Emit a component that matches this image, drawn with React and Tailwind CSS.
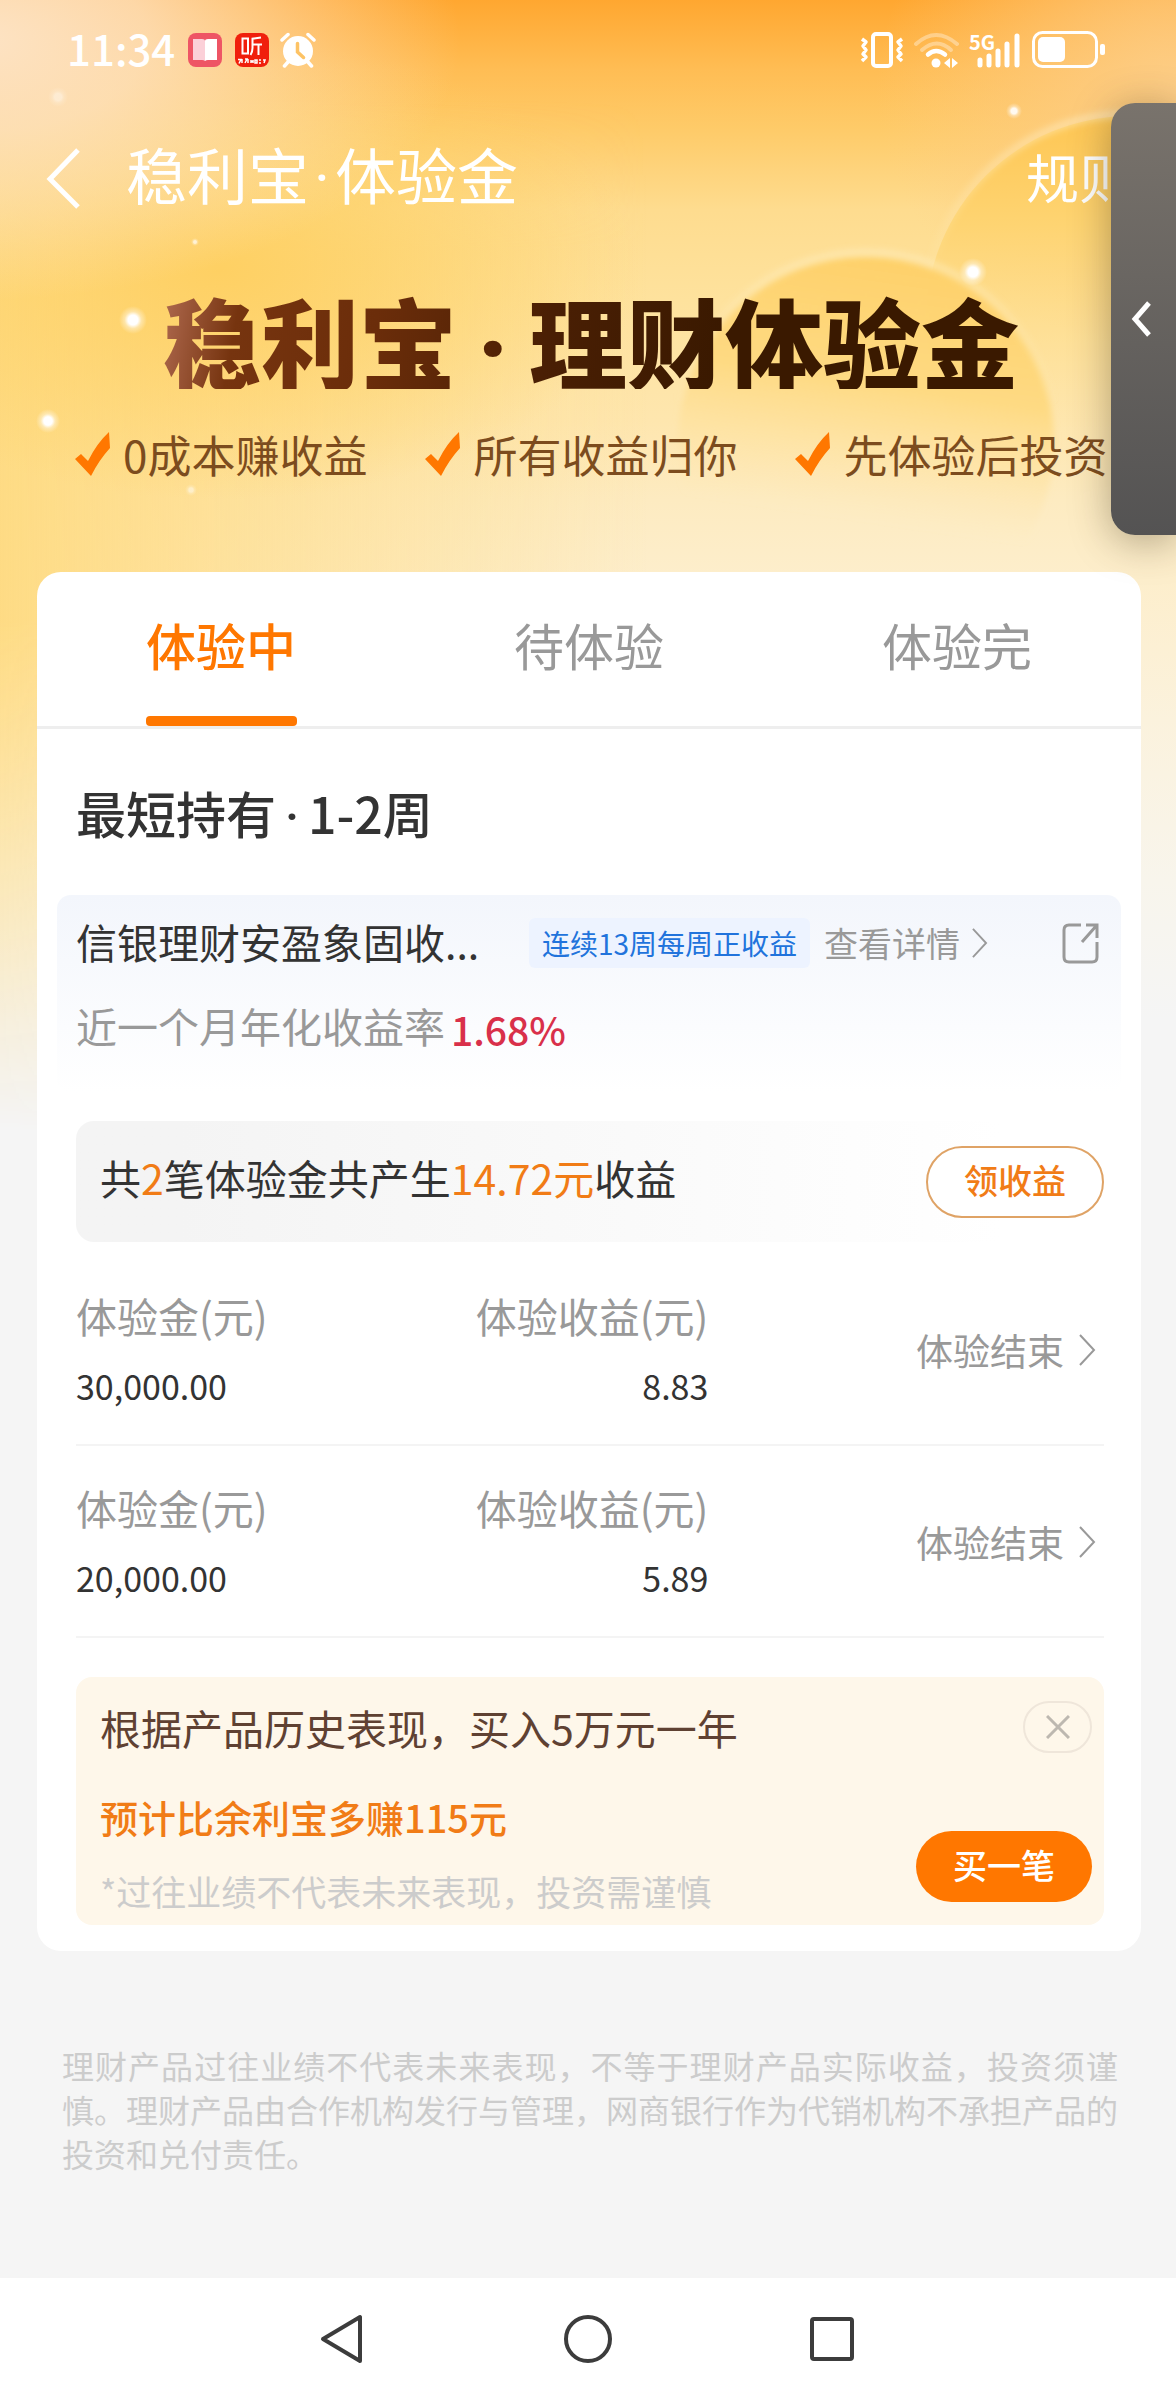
import React, { useState } from 'react';

const TABS = ['体验中', '待体验', '体验完'];
const PERKS = ['0成本赚收益', '所有收益归你', '先体验后投资'];
const RECORDS = [
  { amount: '30,000.00', income: '8.83' },
  { amount: '20,000.00', income: '5.89' },
];

const SPARKS = [
  { x: 133, y: 320, r: 7, o: 1 },
  { x: 48, y: 421, r: 6, o: 1 },
  { x: 973, y: 272, r: 7, o: 1 },
  { x: 1014, y: 111, r: 4, o: 0.9 },
  { x: 58, y: 97, r: 5, o: 0.4 },
  { x: 195, y: 242, r: 2, o: 0.7 },
  { x: 191, y: 490, r: 3, o: 0.5 },
];

function Backdrop() {
  return (
    <div className="absolute inset-x-0 top-0 -z-10 h-[1200px] overflow-hidden bg-[linear-gradient(to_bottom,#ffa730_0px,#ffbd54_70px,#fecb69_130px,#fedc8f_210px,#fee29d_300px,#fee6ae_420px,#fdebc1_500px,#fdeecc_580px,#fbf2dd_720px,#f8f5ec_880px,#f5f5f5_1020px)]">
      <div className="absolute inset-0 bg-[linear-gradient(to_right,#fedb84_0%,#fedb8400_55%)] [mask-image:linear-gradient(to_bottom,transparent_100px,black_250px,black_620px,transparent_1130px)]" />
      <div className="absolute inset-0 bg-[radial-gradient(ellipse_420px_230px_at_220px_270px,#fed063,#fed06300)]" />
      <div className="absolute inset-0 bg-[radial-gradient(ellipse_480px_260px_at_-20px_40px,#fde3c4,#fde3c4cc_35%,#fde3c400)]" />
      <div className="absolute inset-0 bg-[radial-gradient(ellipse_300px_260px_at_100%_90px,#fdcd86,#fdcd8600)]" />
      <svg className="absolute right-0 top-0" width="1176" height="640" viewBox="0 0 1176 640" fill="none" aria-hidden="true">
        <defs>
          <linearGradient id="sunA" x1="0" y1="115" x2="0" y2="430" gradientUnits="userSpaceOnUse">
            <stop offset="0" stopColor="#fec653" />
            <stop offset="0.35" stopColor="#fed472" />
            <stop offset="1" stopColor="#fee29d" stopOpacity="0" />
          </linearGradient>
          <linearGradient id="sunB" x1="900" y1="250" x2="860" y2="520" gradientUnits="userSpaceOnUse">
            <stop offset="0" stopColor="#fed068" />
            <stop offset="0.5" stopColor="#fed97f" stopOpacity="0.9" />
            <stop offset="1" stopColor="#fee6ae" stopOpacity="0" />
          </linearGradient>
          <linearGradient id="rim" x1="0" y1="0" x2="0" y2="1">
            <stop offset="0" stopColor="#fff0c8" stopOpacity="0.5" />
            <stop offset="0.4" stopColor="#fff0c8" stopOpacity="0" />
          </linearGradient>
          <filter id="soft" x="-20%" y="-20%" width="140%" height="140%">
            <feGaussianBlur stdDeviation="3" />
          </filter>
          <radialGradient id="spark">
            <stop offset="0.35" stopColor="#fff" />
            <stop offset="0.6" stopColor="#fff" stopOpacity="0.4" />
            <stop offset="1" stopColor="#fff" stopOpacity="0" />
          </radialGradient>
        </defs>
        <circle cx="1130" cy="320" r="204" fill="url(#sunA)" />
        <circle cx="1130" cy="320" r="206" stroke="url(#rim)" strokeWidth="8" filter="url(#soft)" />
        <circle cx="866" cy="443" r="188" fill="url(#sunB)" filter="url(#soft)" />
        <circle cx="866" cy="443" r="190" stroke="url(#rim)" strokeWidth="8" filter="url(#soft)" />
        {SPARKS.map((s) => (
          <circle key={`${s.x}-${s.y}`} cx={s.x} cy={s.y} r={s.r * 2} fill="url(#spark)" opacity={s.o} />
        ))}
      </svg>
    </div>
  );
}

// half-width middle dot, the CJK face draws it a full em wide
function Dot({ className }) {
  return <span className={`inline-block text-center font-['Roboto',sans-serif] leading-[0] ${className}`}>·</span>;
}

function ChevronRight({ className }) {
  return (
    <svg className={className} viewBox="0 0 18 32" fill="none" stroke="currentColor" strokeWidth="2" aria-hidden="true">
      <path d="M2 1l14 15L2 31" />
    </svg>
  );
}

function StatusBar() {
  return (
    <div className="flex h-[100px] items-center justify-between pl-[67px] pr-[71px] text-white">
      <div className="flex items-center">
        <span className="pb-[4px] text-[42px] leading-[60px] font-medium">11:34</span>
        {/* reader app */}
        <svg className="ml-[13px]" width="34" height="34" viewBox="0 0 34 34" aria-hidden="true">
          <rect width="34" height="34" rx="8" fill="#ee5565" />
          <path d="M5 6h9q3 0 3 2v20q-1-1-3-1H5z" fill="#fbd0d8" />
          <path d="M29 6h-9q-3 0-3 2v20q1-1 3-1h9z" fill="#fff" />
        </svg>
        {/* audio app */}
        <svg className="ml-[13px]" width="34" height="34" viewBox="0 0 34 34" aria-hidden="true">
          <rect width="34" height="34" rx="8" fill="#f01f0c" />
          <path d="M7.500 5.500h5.500v15H7.500zM26 4.500l-8.500 1.200V15q0 4-2 7M17.500 11.500H27M23.500 11.500V22" fill="none" stroke="#fff" strokeWidth="2" />
          <path d="M3 26.500h3l-2 4M7 26v4M10 26h2l-2 4M13 26v4M16 27v3M18 27v3M16 28.500h2M20 27h2v3h-2zM24 27h2M24 30h2M28 27h2l-1 3" fill="none" stroke="#fff" strokeWidth="1.500" />
        </svg>
        {/* alarm */}
        <svg className="ml-[11px]" width="36" height="36" viewBox="0 0 36 36" aria-hidden="true">
          <circle cx="18" cy="19" r="15" fill="#fff" />
          <path d="M2 8l6-5.500M34 8l-6-5.500M8 30l-3.500 4M28 30l3.500 4" stroke="#fff" strokeWidth="3.500" strokeLinecap="round" />
          <path d="M17.500 11.500v8.500l6 5.500" fill="none" stroke="#fdc365" strokeWidth="3.500" strokeLinecap="round" />
        </svg>
      </div>
      <div className="flex items-center">
        {/* vibrate */}
        <svg width="44" height="36" viewBox="0 0 44 36" fill="none" stroke="#fff" aria-hidden="true">
          <rect x="13" y="2" width="18" height="32" rx="3" strokeWidth="4" />
          <path d="M2 7l4 3-3 4 3 4-3 4 3 3-4 4M42 7l-4 3 3 4-3 4 3 4-3 3 4 4" strokeWidth="3.500" strokeLinejoin="round" />
        </svg>
        {/* wifi */}
        <svg className="ml-[10px]" width="46" height="36" viewBox="0 0 46 36" fill="none" stroke="#fff" strokeLinecap="round" aria-hidden="true">
          <path d="M2 12q20-18 41 0" strokeWidth="4" opacity="0.35" />
          <path d="M8 18q15-13 29 0" strokeWidth="4" opacity="0.35" />
          <path d="M14 22.500q8-7 17 0" strokeWidth="4.500" />
          <circle cx="22" cy="31" r="4.500" fill="#fff" stroke="none" />
          <path d="M36 26v10l-6-5zM38 26v10l6-5z" fill="#fff" stroke="none" />
        </svg>
        {/* signal */}
        <svg className="ml-[8px] overflow-visible" width="52" height="36" viewBox="0 0 52 36" fill="none" stroke="#fff" strokeWidth="5" strokeLinecap="round" aria-hidden="true">
          <text x="1" y="18" fontSize="20" fontWeight="700" fill="#fff" stroke="none" fontFamily="'Noto Sans CJK SC', sans-serif">5G</text>
          <path d="M12 28v5M21 24v9M30 19v14M39 12v21M49 4v29" />
        </svg>
        {/* battery */}
        <svg className="ml-[12px]" width="73" height="38" viewBox="0 0 73 38" aria-hidden="true">
          <rect x="1.500" y="1.500" width="63" height="34" rx="9" fill="none" stroke="#fff" strokeWidth="3" />
          <rect x="6" y="6" width="27" height="25" rx="5" fill="#fff" />
          <rect x="68" y="13" width="5" height="11" rx="2" fill="#fff" />
        </svg>
      </div>
    </div>
  );
}

function Banner() {
  return (
    <section>
      <h1 className="mt-[33px] ml-[163px] w-fit bg-[linear-gradient(100deg,#b06a50_0%,#76340f_9%,#6b2d0a_25%,#4a1f04_45%,#3a1900_65%)] bg-clip-text text-[98px] leading-[100px] font-black whitespace-nowrap text-transparent">
        稳利宝<Dot className="w-[72px]" />理财体验金
      </h1>
      <ul className="mt-[35px] flex gap-[58px] pl-[75px] text-[44px] leading-[60px] whitespace-nowrap text-[#7c4c1e]">
        {PERKS.map((perk) => (
          <li key={perk} className="flex items-center gap-[12px]">
            <svg width="36" height="45" viewBox="0 0 36 45" fill="#ff7700" aria-hidden="true">
              <path d="M0 27l6-5 7 7Q22 11 34 0l1 16Q24 28 16 44z" />
            </svg>
            {perk}
          </li>
        ))}
      </ul>
    </section>
  );
}

function ProductPanel() {
  return (
    <section className="mx-[20px] rounded-[14px] bg-linear-to-b from-[#f3f6fc] to-white px-[19px] pt-[18px] pb-[34px]">
      <div className="flex h-[60px] items-center">
        <h3 className="pb-[4px] text-[41px] leading-[60px] whitespace-nowrap text-[#333]">信银理财安盈象固收...</h3>
        <span className="ml-auto rounded-[6px] bg-[#edf3ff] px-[13px] text-[28px] leading-[50px] whitespace-nowrap text-[#2173dc]">连续13周每周正收益</span>
        <a href="#detail" className="ml-[14px] flex items-center gap-[11px] text-[34px] leading-[50px] whitespace-nowrap text-[#999]">
          查看详情
          <ChevronRight className="h-[30px] w-[17px]" />
        </a>
        <button type="button" aria-label="分享" className="mr-[3px] ml-[74px] text-[#999]">
          <svg width="37" height="42" viewBox="0 0 37 42" fill="none" stroke="currentColor" strokeWidth="3" aria-hidden="true">
            <path d="M19 3H7Q2 3 2 8v27q0 5 5 5h23q5 0 5-5V20M24 3h11v13M35 3L20 20" />
          </svg>
        </button>
      </div>
      <p className="mt-[22px] flex text-[41px] leading-[60px] whitespace-nowrap text-[#999]">
        近一个月年化收益率
        <span className="ml-[6px] pt-[4px] text-[39px] font-medium text-[#d9304a]">1.68%</span>
      </p>
    </section>
  );
}

function Record({ amount, income }) {
  return (
    <li className="flex items-center border-b-2 border-[#f4f4f4] pt-[29px] pb-[28px]">
      <dl className="flex-1">
        <dt className="text-[41px] leading-[64px] text-[#999]">体验金(元)</dt>
        <dd className="mt-[9px] text-[34px] leading-[60px] text-[#333]">{amount}</dd>
      </dl>
      <dl className="text-right">
        <dt className="text-[41px] leading-[64px] text-[#999]">体验收益(元)</dt>
        <dd className="mt-[9px] text-[34px] leading-[60px] text-[#333]">{income}</dd>
      </dl>
      <a href="#record" className="-ml-[12px] flex flex-1 items-center justify-end gap-[14px] pr-[8px] text-[37px] leading-[60px] text-[#999]">
        体验结束
        <ChevronRight className="h-[32px] w-[18px]" />
      </a>
    </li>
  );
}

function Promo({ onClose }) {
  return (
    <section className="mt-[39px] flex justify-between rounded-[16px] bg-[#fef7ea] pr-[12px] pl-[24px]">
      <div className="whitespace-nowrap">
        <p className="pt-[20px] text-[41px] leading-[60px] text-[#5f4132]">根据产品历史表现，买入5万元一年</p>
        <p className="mt-[30px] text-[38px] leading-[60px] font-medium text-[#f17c16]">预计比余利宝多赚115元</p>
        <p className="mt-[14px] pb-[4px] text-[35px] leading-[60px] text-[#ccc]">*过往业绩不代表未来表现，投资需谨慎</p>
      </div>
      <div className="flex flex-col items-end justify-between pt-[24px] pb-[23px]">
        <button type="button" aria-label="关闭" onClick={onClose} className="flex h-[52px] w-[69px] items-center justify-center rounded-full border-2 border-[#efe6da]">
          <svg width="24" height="24" viewBox="0 0 24 24" stroke="#bdb8b0" strokeWidth="3" aria-hidden="true">
            <path d="M1 1l22 22M23 1L1 23" />
          </svg>
        </button>
        <button type="button" className="h-[71px] w-[176px] rounded-full bg-[#ff7700] pb-[4px] text-[34px] font-medium text-white">买一笔</button>
      </div>
    </section>
  );
}

export default function App() {
  const [active, setActive] = useState(0);
  const [showPromo, setShowPromo] = useState(true);

  return (
    <div lang="zh-CN" className="relative isolate flex min-h-screen flex-col overflow-hidden bg-[#f5f5f5] font-['Noto_Sans_CJK_SC',sans-serif]">
      <Backdrop />
      <StatusBar />

      <header className="flex h-[156px] items-center pl-[46px] text-white">
        <button type="button" aria-label="返回">
          <svg width="34" height="62" viewBox="0 0 34 62" fill="none" stroke="currentColor" strokeWidth="5" aria-hidden="true">
            <path d="M32 3L4 32l28 28" />
          </svg>
        </button>
        <span className="ml-[46px] pb-[8px] text-[61px] leading-[80px]">
          稳利宝<Dot className="w-[26px]" />体验金
        </span>
        <a href="#rules" className="mr-[44px] ml-auto pb-[4px] text-[53px] leading-[80px]">规则</a>
      </header>

      <Banner />

      <main className="mt-[88px] mr-[35px] ml-[37px] rounded-[24px] bg-white pb-[26px]">
        <div role="tablist" className="grid grid-cols-3 border-b-3 border-[#eee]">
          {TABS.map((tab, i) => (
            <button
              key={tab}
              type="button"
              role="tab"
              aria-selected={active === i}
              onClick={() => setActive(i)}
              className={`flex flex-col items-center pt-[32px] text-[50px] leading-[80px] ${active === i ? 'font-medium text-[#ff7700]' : 'text-[#999]'}`}
            >
              {tab}
              <span className={`mt-[32px] h-[10px] w-[151px] rounded-[4px] ${active === i ? 'bg-[#ff7700]' : ''}`} />
            </button>
          ))}
        </div>

        <h2 className="px-[39px] pt-[43px] pb-[43px] text-[50px] leading-[80px] font-medium text-[#333]">
          最短持有<Dot className="w-[32px]" />1-2周
        </h2>

        <ProductPanel />

        <div className="pt-[28px] pr-[37px] pl-[39px]">
          <div className="flex h-[121px] items-center justify-between rounded-[18px] bg-linear-to-r from-[#f4f4f4] from-10% to-white to-90% pl-[24px]">
            <p className="pb-[10px] text-[41px] leading-[60px] whitespace-nowrap text-[#333]">
              共<span className="text-[#f17c16]">2</span>笔体验金共产生<span className="text-[#f17c16]">14.72元</span>收益
            </p>
            <button type="button" className="h-[72px] w-[178px] rounded-full border-2 border-[#dfa366] bg-white pb-[4px] text-[34px] font-medium text-[#f17c16]">领收益</button>
          </div>

          <ul className="pt-[12px]">
            {RECORDS.map((r) => (
              <Record key={r.amount} amount={r.amount} income={r.income} />
            ))}
          </ul>

          {showPromo && <Promo onClose={() => setShowPromo(false)} />}
        </div>
      </main>

      <p className="mt-[92px] mr-[58px] mb-[60px] ml-[62px] text-justify text-[32px] leading-[44px] text-[#ccc]">
        理财产品过往业绩不代表未来表现，不等于理财产品实际收益，投资须谨慎。理财产品由合作机构发行与管理，网商银行作为代销机构不承担产品的投资和兑付责任。
      </p>

      <nav className="mt-auto flex h-[122px] items-center justify-center gap-[196px] bg-white text-[#3c3c3c]">
        <button type="button" aria-label="后退">
          <svg width="48" height="50" viewBox="0 0 48 50" fill="none" stroke="currentColor" strokeWidth="4" strokeLinejoin="round" aria-hidden="true">
            <path d="M41 3v44L4 25z" />
          </svg>
        </button>
        <button type="button" aria-label="主页">
          <svg width="50" height="50" viewBox="0 0 50 50" fill="none" stroke="currentColor" strokeWidth="4" aria-hidden="true">
            <circle cx="25" cy="25" r="22" />
          </svg>
        </button>
        <button type="button" aria-label="最近任务">
          <svg width="48" height="50" viewBox="0 0 48 50" fill="none" stroke="currentColor" strokeWidth="4" aria-hidden="true">
            <rect x="3" y="5" width="40" height="40" rx="2" />
          </svg>
        </button>
      </nav>

      <button type="button" aria-label="展开侧栏" className="absolute top-[103px] right-0 flex h-[432px] w-[65px] items-center rounded-l-[24px] bg-linear-to-b from-[#79736c] to-[#545353] pl-[20px] shadow-[0_6px_40px_rgba(60,50,30,0.4)]">
        <svg width="20" height="36" viewBox="0 0 20 36" fill="none" stroke="#fff" strokeWidth="5" aria-hidden="true">
          <path d="M18 2L4 18l14 16" />
        </svg>
      </button>
    </div>
  );
}
